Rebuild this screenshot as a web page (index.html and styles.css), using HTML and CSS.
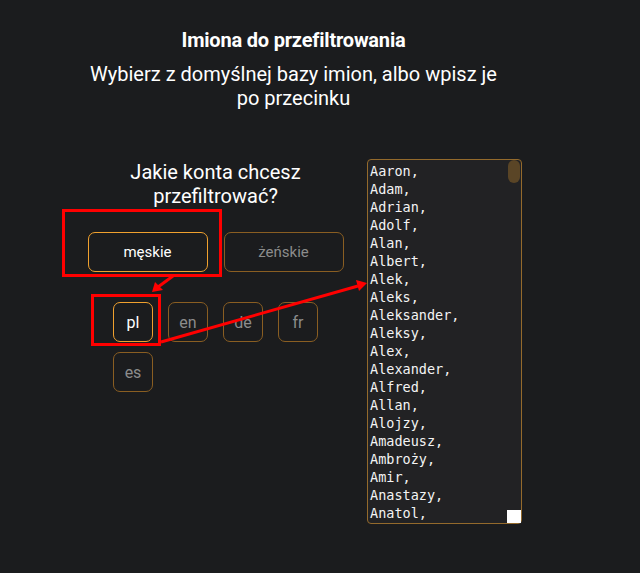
FILE: index.html
```html
<!DOCTYPE html>
<html lang="pl">
<head>
<meta charset="utf-8">
<title>Imiona do przefiltrowania</title>
<link rel="stylesheet" href="styles.css">
</head>
<body>
<div class="page">
  <header class="head">
    <h1 class="title">Imiona do przefiltrowania</h1>
    <p class="subtitle">Wybierz z domyślnej bazy imion, albo wpisz je po przecinku</p>
  </header>
  <div class="row">
    <div class="left">
      <h2 class="question">Jakie konta chcesz przefiltrować?</h2>
      <div class="genders">
        <button class="btn gender active">męskie</button>
        <button class="btn gender">żeńskie</button>
      </div>
      <div class="langs">
        <button class="btn lang active">pl</button>
        <button class="btn lang">en</button>
        <button class="btn lang">de</button>
        <button class="btn lang">fr</button>
        <button class="btn lang">es</button>
      </div>
    </div>
    <div class="names-wrap">
    <textarea class="names" spellcheck="false">Aaron,
Adam,
Adrian,
Adolf,
Alan,
Albert,
Alek,
Aleks,
Aleksander,
Aleksy,
Alex,
Alexander,
Alfred,
Allan,
Alojzy,
Amadeusz,
Ambroży,
Amir,
Anastazy,
Anatol,
Andrzej,
Anzelm,
Antoni,
Apolinary,
Arkadiusz,
Armand,
Arnold,
Aron,
Artur,
Arseniusz,
August,
Augustyn,
Aureliusz,
Baltazar,
Barnaba,
Bartłomiej,
Bartosz,
Bazyli,
Beniamin,
Benedykt,
Bernard,
Bertrand,
Błażej,
Bogdan,
Bogumił,
Bogusław,
Bolesław,
Bonifacy,
Borys,
Bożydar,
Bronisław,
Bruno,
Cezary,
Cyprian,
Cyryl,
Czesław,
Dalibor,
Damian,
Daniel,
Dariusz,
Dawid,
Denis,
Dezydery,
Dionizy,
Dobromił,
Dominik,
Donat,
Dorian,
Edmund,
Edward,
Edwin,
Eliasz,
Emanuel,
Emil,
Eryk,
Ernest,
Eugeniusz,
Euzebiusz,
Fabian,
Feliks,
Ferdynand,
Filip,
Florian,
Franciszek,
Fryderyk,
Gabriel,
Gerard,
Gerwazy,
Gracjan,
Grzegorz,
Gustaw,
Gwidon,
Henryk,
Herbert,
Hieronim,
Hilary,
Hipolit,
Hubert,
Ignacy,
Igor,
Ireneusz,
Iwo,
Izydor,
Jacek,
Jakub,
Jan,
Janusz,
Jarosław,
Jerzy,
Joachim,
Jonasz,
Józef,
Julian,
Juliusz,
Justyn,
Kacper,
Kajetan,
Kamil,
Karol,
Kazimierz,
Klemens,
Konrad,
Konstanty,
Kornel,
Krystian,
Krzysztof,
Ksawery,
Lech,
Leon,
Leonard,
Leszek,
Lucjan,
Ludwik,
Łukasz,
Maciej,
Maksymilian,
Marceli,
Marcel,
Marcin,
Marek,
Marian,
Mariusz,
Mateusz,
Maurycy,
Michał,
Mieczysław,
Mikołaj,
Miłosz,
Mirosław,
Natan,
Nikodem,
Norbert,
Oktawian,
Olaf,
Oliwer,
Oskar,
Patryk,
Paweł,
Piotr,
Przemysław,
Radosław,
Rafał,
Remigiusz,
Robert,
Roman,
Rudolf,
Ryszard,
Sebastian,
Seweryn,
Sławomir,
Stanisław,
Stefan,
Sylwester,
Szymon,
Tadeusz,
Teodor,
Tomasz,
Tymon,
Tymoteusz,
Urban,
Wacław,
Waldemar,
Walenty,
Walery,
Wawrzyniec,
Wiesław,
Wiktor,
Wincenty,
Witold,
Władysław,
Włodzimierz,
Wojciech,
Zbigniew,
Zdzisław,
Zenon,
Zygmunt</textarea>
    <span class="thumb"></span>
    <span class="corner"></span>
    </div>
  </div>
  <svg class="annot" width="640" height="573" viewBox="0 0 640 573" aria-hidden="true">
    <rect x="63.5" y="210.5" width="157" height="65" fill="none" stroke="#ff0000" stroke-width="3"/>
    <rect x="92.5" y="295.5" width="67" height="49" fill="none" stroke="#ff0000" stroke-width="3"/>
    <line x1="173" y1="276" x2="158" y2="287" stroke="#ff0000" stroke-width="3"/>
    <polygon points="152,292 155,282 163,290" fill="#ff0000"/>
    <line x1="161" y1="342" x2="358" y2="286" stroke="#ff0000" stroke-width="3"/>
    <polygon points="367,283 356,280 359,291" fill="#ff0000"/>
  </svg>
</div>
</body>
</html>
```

FILE: styles.css
```css
html, body {
  margin: 0;
  padding: 0;
  background: #1b1c1e;
}
body {
  font-family: Roboto, "Liberation Sans", sans-serif;
  color: #ffffff;
}
.page {
  position: relative;
  width: 640px;
  height: 573px;
  overflow: hidden;
}
.head {
  width: 587px;
  padding-top: 28px;
  display: flex;
  flex-direction: column;
  align-items: center;
  text-align: center;
}
.title {
  margin: 0;
  font-size: 20px;
  line-height: 24px;
  font-weight: 700;
  letter-spacing: -0.2px;
}
.subtitle {
  margin: 10px 0 0;
  width: 420px;
  font-size: 20px;
  line-height: 24px;
  font-weight: 400;
}
.row {
  display: flex;
  align-items: flex-start;
  gap: 24px;
  margin-top: 49px;
  margin-left: 88px;
}
.left {
  width: 255px;
  display: flex;
  flex-direction: column;
  align-items: center;
}
.question {
  margin: 1px 0 0;
  font-size: 20px;
  line-height: 24px;
  font-weight: 400;
  text-align: center;
}
.genders {
  display: flex;
  gap: 16px;
  margin-top: 24px;
}
.btn {
  background: transparent;
  border: 1px solid #8a5e22;
  border-radius: 7px;
  color: #8c8c8c;
  font-family: Roboto, "Liberation Sans", sans-serif;
  padding: 0;
  cursor: pointer;
}
.btn.active {
  border-color: #f0a12e;
  color: #ffffff;
}
.gender {
  width: 120px;
  height: 40px;
  font-size: 15px;
}
.langs {
  display: grid;
  grid-template-columns: repeat(4, 40px);
  column-gap: 15px;
  row-gap: 10px;
  margin-top: 30px;
}
.lang {
  width: 40px;
  height: 40px;
  font-size: 16px;
}
.names-wrap {
  position: relative;
  width: 155px;
  height: 365px;
}
.names {
  display: block;
  box-sizing: border-box;
  width: 155px;
  height: 365px;
  margin: 0;
  padding: 2px 14px 0 2px;
  background: #222224;
  border: 1px solid #946a2c;
  border-radius: 4px;
  color: #f4f4f4;
  font-family: "DejaVu Sans Mono", "Liberation Mono", monospace;
  font-size: 13.5px;
  line-height: 18px;
  resize: none;
  overflow: hidden;
  outline: none;
}
.thumb {
  position: absolute;
  top: 1px;
  right: 2px;
  width: 12px;
  height: 23px;
  border-radius: 6px;
  background: #5a4526;
}
.corner {
  position: absolute;
  right: 1px;
  bottom: 1px;
  width: 14px;
  height: 13px;
  background: #ffffff;
}
.annot {
  position: absolute;
  left: 0;
  top: 0;
  pointer-events: none;
}
```
